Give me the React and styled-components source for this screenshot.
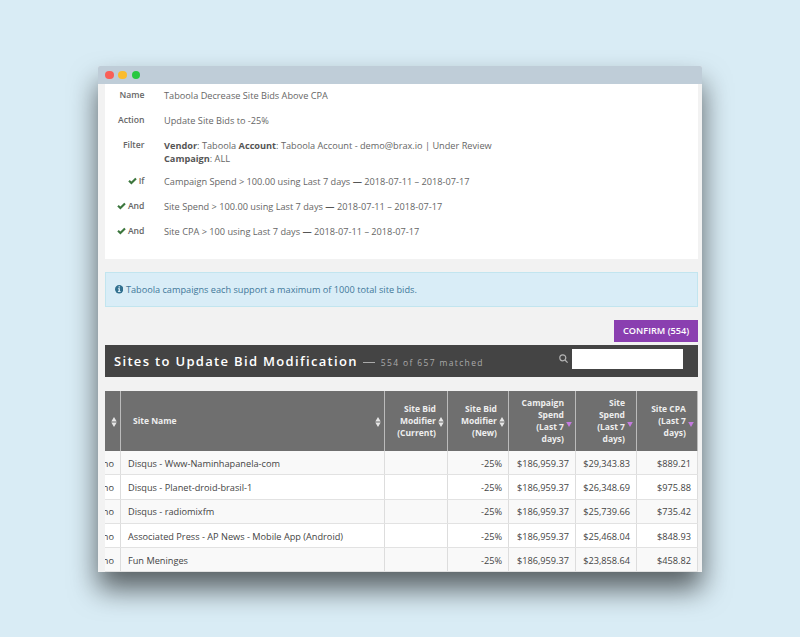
import React from "react";
import styled, { createGlobalStyle, css } from "styled-components";

const GlobalStyle = createGlobalStyle`
  * {
    box-sizing: border-box;
  }
  body {
    margin: 0;
    background: #d9ecf5;
    font-family: "Open Sans", sans-serif;
    overflow: hidden;
  }
`;

const Page = styled.div`
  height: 637px;
  padding: 66px 98px 0 98.4px;
`;

const Window = styled.div`
  height: 505.5px;
  background: #f2f2f2;
  border-radius: 2px 2px 0 0;
  box-shadow: 0 17px 28px rgba(0, 0, 0, 0.6);
`;

const TitleBar = styled.div`
  height: 18px;
  padding-left: 7px;
  display: flex;
  align-items: center;
  gap: 4.7px;
  background: #bfcdd8;
  border-radius: 2px 2px 0 0;
`;

const Dot = styled.span`
  width: 8.4px;
  height: 8.4px;
  border-radius: 50%;
  background: ${(props) => props.$color};
`;

const Content = styled.div`
  height: 487.5px;
  padding: 0 4px 0 6.6px;
  overflow: hidden;
`;

const Details = styled.div`
  width: 592.6px;
  height: 175px;
  padding-top: 5px;
  background: #fff;
`;

const DetailRow = styled.div`
  display: flex;
  height: ${(props) => (props.$tall ? 36.2 : 24.9)}px;
  line-height: 13px;
`;

const Label = styled.div`
  width: 39.5px;
  margin-right: 19.5px;
  display: flex;
  justify-content: flex-end;
  align-items: center;
  gap: 2px;
  height: 13px;
  flex-shrink: 0;
  font-size: 8.65px;
  font-weight: 600;
  color: #666;
  white-space: nowrap;
`;

const Value = styled.div`
  font-size: 9.2px;
  color: #666;
  white-space: nowrap;

  b {
    font-weight: 700;
    color: #555;
  }
`;

const Alert = styled.div`
  width: 592.6px;
  height: 35px;
  margin-top: 13px;
  padding-left: 9px;
  display: flex;
  align-items: center;
  gap: 2.5px;
  background: #d9edf7;
  border: 1px solid #c2e5ef;
  color: #41789a;
  font-size: 9.19px;
`;

const Confirm = styled.button`
  display: block;
  width: 83.6px;
  height: 22px;
  margin: 12.5px 0 3.5px 509.4px;
  padding: 0;
  border: 0;
  background: #8a3fb0;
  color: #fff;
  font-family: inherit;
  font-size: 9.2px;
  font-weight: 600;
  white-space: nowrap;
`;

const SectionBar = styled.div`
  width: 592.6px;
  height: 32px;
  padding-left: 9px;
  display: flex;
  align-items: center;
  background: #444;
`;

const SectionTitle = styled.h2`
  margin: 0;
  color: #fff;
  font-size: 13px;
  font-weight: 600;
  letter-spacing: 1.32px;
  white-space: nowrap;
`;

const Matched = styled.small`
  color: #aaa;
  font-size: 8.5px;
  font-weight: 400;
  letter-spacing: 1.36px;
`;

const Dash = styled.span`
  display: inline-block;
  width: 12px;
  height: 1px;
  margin: 0 6px 3.5px 5px;
  background: #aaa;
`;

const Search = styled.div`
  margin-left: auto;
  padding: 0 15px 4px 0;
  display: flex;
  align-items: center;
  gap: 4px;

  svg {
    margin-bottom: 2px;
  }
`;

const SearchInput = styled.input`
  width: 111px;
  height: 19.5px;
  padding: 0 4px;
  border: 0;
  background: #fff;
`;

const Table = styled.div`
  width: 593px;
  margin-top: 13.5px;
`;

const columns = css`
  display: grid;
  grid-template-columns: 16px 264px 63px 61px 67px 61px 61px;
`;

const HeadRow = styled.div`
  ${columns}
  height: 60.5px;
  background: #6f6f6f;
`;

const HeadCell = styled.div`
  min-width: 0;
  padding-right: ${(props) => (props.$left ? 0 : 11)}px;
  padding-left: ${(props) => (props.$left ? 12 : 0)}px;
  display: flex;
  align-items: center;
  justify-content: ${(props) => (props.$left ? "flex-start" : "flex-end")};
  position: relative;
  border-right: 1px solid #bbb;
  color: #eee;
  font-size: 8.5px;
  font-weight: 700;
  line-height: 11.8px;
  text-align: right;
  white-space: pre;
`;

const SortIcon = styled.svg`
  position: absolute;
  right: 3px;
  top: ${(props) => (props.$active ? 31 : 26)}px;
`;

const Row = styled.div`
  ${columns}
  height: 24.3px;
  background: ${(props) => (props.$odd ? "#f9f9f9" : "#fff")};
  border-bottom: 1px solid #e2e2e2;
`;

const Cell = styled.div`
  padding: 1.5px 6px 0 7px;
  display: flex;
  align-items: center;
  justify-content: ${(props) => (props.$left ? "flex-start" : "flex-end")};
  min-width: 0;
  border-right: 1px solid #ddd;
  color: #444;
  font-size: 9.2px;
  white-space: nowrap;
`;

const TableClip = styled.div`
  width: 593px;
  overflow: hidden;
`;

const heads = [
  { text: "", sort: "both" },
  { text: "Site Name", sort: "both", left: true },
  { text: "Site Bid\nModifier\n(Current)", sort: "both" },
  { text: "Site Bid\nModifier\n(New)", sort: "both" },
  { text: "Campaign\nSpend\n(Last 7\ndays)", sort: "down" },
  { text: "Site\nSpend\n(Last 7\ndays)", sort: "down" },
  { text: "Site CPA\n(Last 7\ndays)", sort: "down" },
];

const sites = [
  ["Disqus - Www-Naminhapanela-com", "$29,343.83", "$889.21"],
  ["Disqus - Planet-droid-brasil-1", "$26,348.69", "$975.88"],
  ["Disqus - radiomixfm", "$25,739.66", "$735.42"],
  ["Associated Press - AP News - Mobile App (Android)", "$25,468.04", "$848.93"],
  ["Fun Meninges", "$23,858.64", "$458.82"],
];

const Sort = ({ type }) =>
  type === "both" ? (
    <SortIcon width="6" height="10" viewBox="0 0 6 10" fill="#e6e6e6">
      <path d="M3 0 5.7 4.4H.3zM3 10 .3 5.6h5.4z" />
    </SortIcon>
  ) : (
    <SortIcon $active width="6" height="5" viewBox="0 0 6 5" fill="#c47be0">
      <path d="M.2 0h5.6L3 5z" />
    </SortIcon>
  );

const Check = () => (
  <svg width="9" height="8" viewBox="0 0 9 8" fill="none" stroke="#3c763d" strokeWidth="2.1">
    <path d="M1 3.8l2.4 2.3L8 1.5" />
  </svg>
);

const Info = () => (
  <svg width="8.4" height="8.4" viewBox="0 0 8 8">
    <circle cx="4" cy="4" r="4" fill="#31708f" />
    <path d="M3.4 1.1h1.3v1.2H3.4zM2.8 3h1.9v2.7h.6v.9H2.8v-.9h.6V3.9h-.6z" fill="#d9edf7" />
  </svg>
);

const App = () => {
  return (
    <>
      <GlobalStyle />
      <Page>
        <Window>
          <TitleBar>
            <Dot $color="#f95f57" />
            <Dot $color="#fbbc2e" />
            <Dot $color="#28c841" />
          </TitleBar>
          <Content>
            <Details>
              <DetailRow>
                <Label>Name</Label>
                <Value>Taboola Decrease Site Bids Above CPA</Value>
              </DetailRow>
              <DetailRow>
                <Label>Action</Label>
                <Value>Update Site Bids to -25%</Value>
              </DetailRow>
              <DetailRow $tall>
                <Label>Filter</Label>
                <Value>
                  <b>Vendor</b>: Taboola <b>Account</b>: Taboola Account - demo@brax.io | Under Review
                  <br />
                  <b>Campaign</b>: ALL
                </Value>
              </DetailRow>
              <DetailRow>
                <Label>
                  <Check /> If
                </Label>
                <Value>
                  Campaign Spend &gt; 100.00 using Last 7 days <b>—</b> 2018-07-11 – 2018-07-17
                </Value>
              </DetailRow>
              <DetailRow>
                <Label>
                  <Check /> And
                </Label>
                <Value>
                  Site Spend &gt; 100.00 using Last 7 days <b>—</b> 2018-07-11 – 2018-07-17
                </Value>
              </DetailRow>
              <DetailRow>
                <Label>
                  <Check /> And
                </Label>
                <Value>
                  Site CPA &gt; 100 using Last 7 days <b>—</b> 2018-07-11 – 2018-07-17
                </Value>
              </DetailRow>
            </Details>
            <Alert>
              <Info />
              Taboola campaigns each support a maximum of 1000 total site bids.
            </Alert>
            <Confirm>CONFIRM (554)</Confirm>
            <SectionBar>
              <SectionTitle>
                Sites to Update Bid Modification
                <Dash />
                <Matched>554 of 657 matched</Matched>
              </SectionTitle>
              <Search>
                <svg width="9" height="9" viewBox="0 0 9 9" fill="none" stroke="#b5b5b5" strokeWidth="1.2">
                  <circle cx="3.8" cy="3.8" r="3" />
                  <path d="M6 6l2.6 2.6" />
                </svg>
                <SearchInput />
              </Search>
            </SectionBar>
            <TableClip>
              <Table>
                <HeadRow>
                  {heads.map((head, i) => (
                    <HeadCell key={i} $left={head.left}>
                      {head.text}
                      <Sort type={head.sort} />
                    </HeadCell>
                  ))}
                </HeadRow>
                {sites.map(([name, spend, cpa], i) => (
                  <Row key={name} $odd={i % 2 === 0}>
                    <Cell>no</Cell>
                    <Cell $left>{name}</Cell>
                    <Cell />
                    <Cell>-25%</Cell>
                    <Cell>$186,959.37</Cell>
                    <Cell>{spend}</Cell>
                    <Cell>{cpa}</Cell>
                  </Row>
                ))}
              </Table>
            </TableClip>
          </Content>
        </Window>
      </Page>
    </>
  );
};

export default App;
